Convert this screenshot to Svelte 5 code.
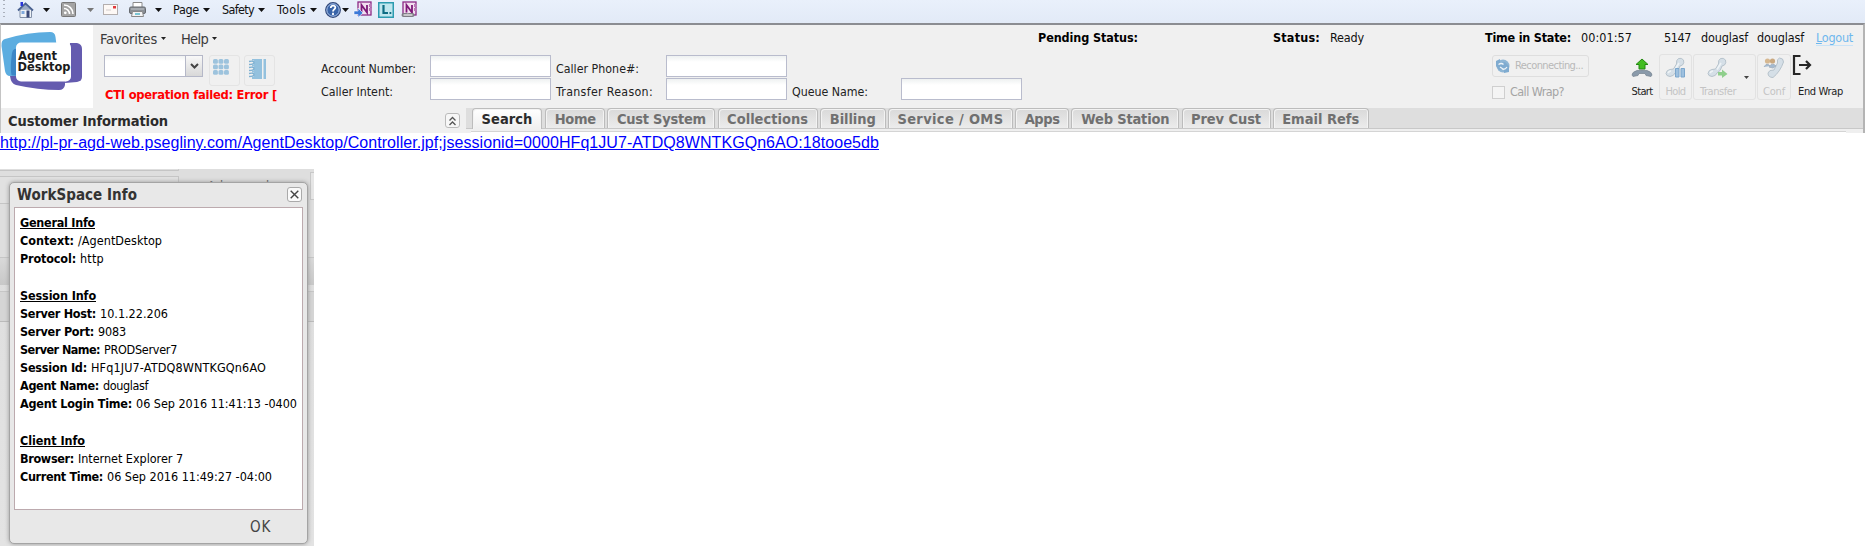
<script>
  // Spread the tracking of a label so that it fills the width given for it.
  function fit(node, width) {
    node.style.letterSpacing = '0px';
    const natural = node.getBoundingClientRect().width;
    node.style.letterSpacing = (width - natural) / node.textContent.length + 'px';
  }
  const tabs = [
    ['Search', 51, 70], ['Home', 41, 60], ['Cust System', 89, 108], ['Collections', 81, 100],
    ['Billing', 46, 66], ['Service / OMS', 106, 125], ['Apps', 35, 54],
    ['Web Station', 88, 108], ['Prev Cust', 70, 89], ['Email Refs', 77, 96]
  ];
  const info = [
    ['General Info', 75],
    ['Context:', 54, '/AgentDesktop', 84],
    ['Protocol:', 56, 'http', 24],
    [],
    ['Session Info', 76],
    ['Server Host:', 76, '10.1.22.206', 68],
    ['Server Port:', 74, '9083', 28],
    ['Server Name:', 80, 'PRODServer7', 73],
    ['Session Id:', 67, 'HFq1JU7-ATDQ8WNTKGQn6AO', 175],
    ['Agent Name:', 79, 'douglasf', 45],
    ['Agent Login Time:', 112, '06 Sep 2016 11:41:13 -0400', 161],
    [],
    ['Client Info', 65],
    ['Browser:', 54, 'Internet Explorer 7', 105],
    ['Current Time:', 83, '06 Sep 2016 11:49:27 -04:00', 165]
  ];
</script>

{#snippet arrow()}
  <svg class="arrow" width="7" height="4" viewBox="0 0 7 4"><path d="M0 0h7L3.500 4z" fill="currentColor" /></svg>
{/snippet}
{#snippet handset()}
  <path d="M1 16.500Q1.500 13 5 12.500l3.500-.5 3-5Q11 3 13.500 1.500q3-1 5 1.500 1 3-1 5L15 9q-1 5-5 7-1 3-5 3.500-4-.5-4-3z" stroke="#b7c3cc" fill="#d5dfe7" />
  <path d="M10 12.500l4-6.500M3 16q1-2 3-2" stroke="#eef3f6" stroke-width="1.700" fill="none" />
{/snippet}
{#snippet onenote()}
  <rect x="5" y="1" width="13" height="13" fill="#f2dff0" stroke="#8b2a86" stroke-width="1.300" />
  <path d="M16 3h3v3h-3zM16 7h3v3h-3z" fill="#b877b5" />
  <path d="M8.500 11.500V4l5.500 7.500V4" fill="none" stroke="#7d1978" stroke-width="1.800" />
{/snippet}

<div class="page">
  <div class="toolbar">
    <div class="grip"></div>
    <svg class="home" width="17" height="17" viewBox="0 0 17 17"><path d="M3 8h11.500v8.500H3z" fill="#eef2f7" stroke="#8391a8" /><path d="M8.500 3.500l5 5h-10z" fill="#9aa9c4" /><path d="M1 9.500l7.500-7 7.500 7" fill="none" stroke="#4a6291" stroke-width="1.800" /><path d="M3.500 1h2.500v4H3.500z" fill="#2834d8" /><path d="M4.500 10h3v3h-3z" fill="#7fa9dc" /><path d="M9.500 9.500h3v7h-3z" fill="#3b4a78" /></svg>
    <span class="a1">{@render arrow()}</span>
    <svg class="rss" width="15" height="15" viewBox="0 0 15 15"><rect x=".5" y=".5" width="14" height="14" rx="1" fill="#a4a4a4" stroke="#777" /><circle cx="4.300" cy="10.800" r="1.400" fill="#fff" /><path d="M3 6.500a5.500 5.500 0 0 1 5.500 5.500M3 3a9 9 0 0 1 9 9" fill="none" stroke="#fff" stroke-width="1.600" /></svg>
    <span class="a2">{@render arrow()}</span>
    <svg class="mail" width="15" height="11" viewBox="0 0 15 11"><rect x=".5" y=".5" width="14" height="10" fill="#fdf8f5" stroke="#b3aeae" /><path d="M10 2h3v2.500h-3z" fill="#e0383c" /><path d="M3 6h5" stroke="#d2cccc" /></svg>
    <svg class="print" width="17" height="15" viewBox="0 0 17 15"><path d="M4 .5h9V6H4z" fill="#fff" stroke="#8a8a8a" /><rect x=".5" y="5" width="16" height="6.500" rx="1.500" fill="#8b9096" stroke="#666a70" /><path d="M3.500 9.500h10l1 5h-12z" fill="#f3f3f3" stroke="#888" /><path d="M2 7h13" stroke="#c3c8ce" /><path d="M6 12h5" stroke="#52b4c9" stroke-width="1.500" /></svg>
    <span class="a3">{@render arrow()}</span>
    <span class="m1"><span use:fit={26}>Page</span>{@render arrow()}</span>
    <span class="m2"><span use:fit={32}>Safety</span>{@render arrow()}</span>
    <span class="m3"><span use:fit={29}>Tools</span>{@render arrow()}</span>
    <svg class="help" width="16" height="16" viewBox="0 0 16 16"><circle cx="8" cy="8" r="7.300" fill="#3964a8" stroke="#33497a" stroke-width="1.200" /><circle cx="8" cy="8" r="6.200" fill="none" stroke="#a9c1e8" /><path d="M5.800 6c0-3.400 4.800-3 4.500-.3C10.100 7.500 8 7.300 8 9.500M8 10.800V13" fill="none" stroke="#fff" stroke-width="1.800" /></svg>
    <span class="a4">{@render arrow()}</span>
    <svg class="on1" width="20" height="17" viewBox="0 0 20 17">{@render onenote()}<path d="M1 10h4V7l5 5-5 4.500v-3H1z" fill="#3b79d8" stroke="#fff" stroke-width=".6" /></svg>
    <svg class="lync" width="16" height="16" viewBox="0 0 16 16"><rect x=".75" y=".75" width="14.500" height="14.500" fill="#bfe6ee" stroke="#2c9bb0" stroke-width="1.500" /><path d="M5.500 3v8h4.500" fill="none" stroke="#0e6d84" stroke-width="2.200" /><path d="M11.500 10h1.800v2h-1.800z" fill="#0e6d84" /></svg>
    <svg class="on2" width="20" height="17" viewBox="0 0 20 17">{@render onenote()}<path d="M5.500 14h3m2.500 0h3.500" stroke="#7d7d85" stroke-width="4" stroke-linecap="round" /><path d="M5.500 14h9" stroke="#eee" stroke-width="1.300" /></svg>
  </div>

  <div class="panel">
    <div class="header">
      <div class="logo">
        <svg width="92" height="83" viewBox="0 0 92 83">
          <path d="M69 18h7q5 1 5 6v28q0 4-5 5l-12 1z" fill="#645baf" />
          <path d="M9 51h55v9q-1 5-6 5-21 0-43-5-5-1-6-9z" fill="#645baf" />
          <path d="M4 14Q27 7 49 7q5 0 5.500 5l1 8H20v30l-11 1q-4 0-5-5L.500 21Q0 15 4 14z" fill="#5cade0" />
          <path d="M11 28q-2 14-.5 22.500l6 .5V24h-3q-2 1-2.500 4z" fill="#3c86c6" />
          <rect x="15" y="17.500" width="55" height="39" rx="5" fill="#fff" />
          <text x="17" y="34.500" textLength="39" lengthAdjust="spacingAndGlyphs">Agent</text>
          <text x="16.500" y="46" textLength="53" lengthAdjust="spacingAndGlyphs">Desktop</text>
        </svg>
      </div>

      <div class="left">
        <div class="menus">
          <span class="fav"><span use:fit={57}>Favorites</span>{@render arrow()}</span>
          <span class="hlp"><span use:fit={27}>Help</span>{@render arrow()}</span>
        </div>
        <div class="dial">
          <div class="combo"><div class="drop"><svg width="9" height="6" viewBox="0 0 9 6"><path d="M1 1l3.500 3.500L8 1" fill="none" stroke="#444" stroke-width="2" /></svg></div></div>
          <div class="tool"><svg width="16" height="16" viewBox="0 0 16 16" fill="#9dc3dd">{#each [0, 5.500, 11] as y}{#each [0, 5.500, 11] as x}<rect {x} {y} width="4.900" height="4.700" rx="1.500" />{/each}{/each}</svg></div>
          <div class="tool book"><svg width="20" height="20" viewBox="0 0 20 20"><path d="M5 0h10v20H5zM16.500 0H19v20h-2.500z" fill="#93c1de" /><path d="M0 3.500h7M0 9.500h7M0 15.500h7" stroke="#f0f0f0" stroke-width="4" /><path d="M2 2.500q5-1 5 1t-5 2M2 8.500q5-1 5 1t-5 2M2 14.500q5-1 5 1t-5 2" fill="none" stroke="#7fb1d2" stroke-width="1.400" /></svg></div>
        </div>
        <div class="error"><span use:fit={172}>CTI operation failed: Error [</span></div>
      </div>

      <div class="fields">
        <span use:fit={95}>Account Number:</span><div class="input"></div>
        <span use:fit={83}>Caller Phone#:</span><div class="input"></div>
        <span></span><span></span>
        <span use:fit={72}>Caller Intent:</span><div class="input"></div>
        <span use:fit={97}>Transfer Reason:</span><div class="input"></div>
        <span use:fit={76}>Queue Name:</span><div class="input"></div>
      </div>

      <div class="right">
        <div class="status">
          <b class="pend"><span use:fit={100}>Pending Status:</span></b>
          <b class="stat"><span use:fit={47}>Status:</span></b>
          <span class="ready"><span use:fit={34}>Ready</span></span>
          <b class="time"><span use:fit={86}>Time in State:</span></b>
          <span class="clock"><span use:fit={51}>00:01:57</span></span>
          <span class="ext"><span use:fit={27}>5147</span></span>
          <span class="u1"><span use:fit={47}>douglasf</span></span>
          <span class="u2"><span use:fit={47}>douglasf</span></span>
          <span class="logout"><span use:fit={37}><u>L</u>ogout</span></span>
        </div>
        <div class="calls">
          <div class="wrapcol">
            <div class="recon"><svg width="16" height="16" viewBox="0 0 16 16"><circle cx="8" cy="8" r="6.500" fill="#8fb6d5" /><path d="M1 3l4-2v4l5-1 4 4v6l-5 1v-4l-5 1-3-4z" fill="#7fabd0" /><path d="M3.500 6.500q3-2 5 0M7 11q3 1 5-2M5 9l3 2" fill="none" stroke="#eef4f8" stroke-width="1.300" /></svg><span use:fit={68}>Reconnecting...</span></div>
            <div class="check"><i></i><span use:fit={54}>Call Wrap?</span></div>
          </div>
          <div class="call start">
            <svg width="22" height="22" viewBox="0 0 22 22"><path d="M11 2l6 5.500h-3V12H8V7.500H5z" fill="#43bd22" stroke="#258a12" /><path d="M1 18q0-3 5-4.500 5-1 10 0 5 1.500 5 4.500l-1 1.500-5-1-1-2H8l-1 2-5 1z" fill="#8a9aaa" stroke="#75828f" stroke-width=".7" /></svg>
            <span use:fit={21}>Start</span>
          </div>
          <div class="call hold">
            <svg width="22" height="22" viewBox="0 0 22 22">{@render handset()}<path d="M10.500 11.500H14v8.500h-3.500zM16 11.500h3.500V20H16z" fill="#9dc0df" stroke="#7ba6cc" /></svg>
            <span use:fit={20}>Hold</span>
          </div>
          <div class="call transfer">
            <svg width="22" height="22" viewBox="0 0 22 22">{@render handset()}<path d="M11 15h4v-2.500l5.500 4.500-5.500 4v-2.500h-4z" fill="#8fcf8c" /></svg>
            <span use:fit={36}>Transfer</span>
            <div class="more"><svg width="5" height="3" viewBox="0 0 5 3"><path d="M0 0h5L2.500 3z" fill="#444" /></svg></div>
          </div>
          <div class="call conf">
            <svg width="22" height="22" viewBox="0 0 22 22"><path d="M5 16q0 4.500 5 4.500Q17 15 20.500 5q0-4-4-4-3 1-2 5L11 13q-5-.500-6 3z" fill="#d5dfe7" stroke="#b7c3cc" /><circle cx="4.500" cy="4" r="2.600" fill="#d6b891" /><circle cx="9.500" cy="4" r="2.600" fill="#c9a880" /><path d="M1 10q3-5 6-1M6 10q3-5 7-1l-3 2z" fill="#a3bad1" stroke="#a5b3c2" /></svg>
            <span use:fit={22}>Conf</span>
          </div>
          <div class="call end">
            <svg width="22" height="22" viewBox="0 0 22 22"><path d="M8.500 1H2v18h6.500M7 10h11M14 6l4 4-4 4" fill="none" stroke="#262626" stroke-width="2.200" /></svg>
            <span use:fit={45}>End Wrap</span>
          </div>
        </div>
      </div>
    </div>

    <div class="lower">
      <div class="customer">
        <span use:fit={160}>Customer Information</span>
        <div class="mini"><svg width="9" height="10" viewBox="0 0 9 10"><path d="M1.500 4.500l3-3 3 3M1.500 9l3-3 3 3" fill="none" stroke="#555" stroke-width="1.300" /></svg></div>
      </div>
      <div class="content">
        <div class="tabs">
          {#each tabs as [name, tw, w], i}
            <div class="tab" class:active={i === 0} style:width={w + 'px'}><span use:fit={tw}>{name}</span></div>
          {/each}
        </div>
        <div class="strip"><div class="inner"></div></div>
      </div>
    </div>
  </div>

  <div class="linkrow"><a href="#session"><span use:fit={879}>http://pl-pr-agd-web.psegliny.com/AgentDesktop/Controller.jpf;jsessionid=0000HFq1JU7-ATDQ8WNTKGQn6AO:18tooe5db</span></a></div>

  <div class="backdrop">
    <div class="back1"></div><div class="back2"></div><div class="band"></div><div class="band low"></div>
    <div class="adv">Advanced</div><div class="back3"></div>
    <div class="dialog">
      <div class="title"><span use:fit={120}>WorkSpace Info</span><div class="close"><svg width="9" height="9" viewBox="0 0 9 9"><path d="M.7.700l7.600 7.600M8.300.700L.7 8.300" stroke="#444" stroke-width="1.400" /></svg></div></div>
      <div class="body">
        {#each info as [k, kw, v, vw]}
          <div class="line">{#if k}<b class:head={!v}><span use:fit={kw}>{k}</span></b>{/if}{#if v}<span use:fit={vw}>{v}</span>{/if}</div>
        {/each}
      </div>
      <div class="foot"><span use:fit={21}>OK</span></div>
    </div>
  </div>
</div>

<style>
  .page { width: 1865px; height: 546px; overflow: hidden; background: #fff; font: 12.500px/16px "DejaVu Sans Condensed", "DejaVu Sans", sans-serif; font-stretch: condensed; color: #222; white-space: nowrap; }
  .page * { box-sizing: border-box; }
  svg { display: block; flex: none; overflow: visible; }
  span { display: inline-block; }
  .toolbar { height: 23px; display: flex; align-items: center; padding: 0 0 4px 3px; background: linear-gradient(#e9f0fb, #e2eaf7); font-size: 12.500px; color: #111; }
  .grip { width: 2px; height: 20px; background: repeating-linear-gradient(#aab0bb 0 1px, transparent 1px 4px); }
  .toolbar > span { display: flex; align-items: center; gap: 4px; }
  .home { margin-left: 12px; }
  .a1 { margin-left: 9px; }
  .rss { margin-left: 11px; }
  .a2 { margin-left: 11px; color: #777; }
  .mail { margin-left: 9px; }
  .print { margin-left: 11px; }
  .a3 { margin-left: 9px; }
  .m1 { margin-left: 11px; }
  .m2 { margin-left: 12px; }
  .m3 { margin-left: 12px; }
  .help { margin-left: 8px; }
  .a4 { margin-left: 1px; }
  .on1 { margin-left: 4px; }
  .lync { margin-left: 5px; margin-right: 4px; }
  .panel { height: 110px; border-top: 2px solid #8b8d92; border-left: 1px solid #c4c4c4; border-right: 2px solid #b4b4b4; background: #f0f0f0; }
  .header { height: 83px; display: flex; }
  .logo { width: 92px; height: 83px; background: #fff; }
  .logo text { font: bold 12px "DejaVu Sans", sans-serif; fill: #1b1b1b; }
  .left { width: 228px; }
  .menus { display: flex; height: 30px; padding: 5px 0 0 7px; font-size: 14.500px; color: #3a3a3a; }
  .menus > span { display: flex; align-items: center; height: 17px; }
  .menus .arrow { width: 5px; height: 3px; margin-left: 4px; color: #222; }
  .hlp { margin-left: 15px; }
  .dial { display: flex; padding-left: 11px; height: 32px; }
  .combo { width: 99px; height: 22px; border: 1px solid #b5b8c8; background: linear-gradient(#f0f2f2, #fff 5px); display: flex; justify-content: flex-end; }
  .drop { width: 17px; border-left: 1px solid #b5b8c8; background: linear-gradient(#f8f8f8, #d8d8d8); display: grid; place-items: center; }
  .tool { width: 31px; height: 31px; margin-left: 6px; border: 1px solid #e4e4e4; border-radius: 3px; padding: 3px; }
  .book { margin-left: 4px; padding: 3px 2px; }
  .error { padding: 0 0 0 12px; line-height: 16px; font-weight: bold; font-size: 12.800px; color: #f00; }
  .fields { width: 704px; height: 83px; padding-top: 30px; display: grid; grid-template-columns: 109px 126px 110px 126px 109px 121px; grid-template-rows: 23px 23px; justify-items: start; font-size: 12.300px; }
  .fields span { padding-top: 6px; }
  .input { width: 121px; height: 22px; border: 1px solid #b9bccd; background: linear-gradient(#eef1f1, #fff 6px); }
  .right { flex: 1; }
  .status { height: 29px; padding-top: 5px; display: flex; color: #111; margin-left: 13px; }
  .status b { color: #000; }
  .stat { margin-left: 135px; }
  .ready { margin-left: 10px; }
  .time { margin-left: 121px; }
  .clock { margin-left: 10px; }
  .ext { margin-left: 32px; }
  .u1 { margin-left: 10px; }
  .u2 { margin-left: 9px; }
  .logout { margin-left: 12px; color: #6db7ee; border-bottom: 1px solid #c9e3f7; height: 16px; }
  .calls { display: flex; margin-left: 467px; }
  .wrapcol { width: 139px; padding-top: 1px; color: #a4a4a4; }
  .recon { width: 97px; height: 22px; border: 1px solid #dedede; border-radius: 3px; display: flex; align-items: center; gap: 4px; padding-left: 2px; font-size: 11px; color: #b8b8b8; }
  .check { display: flex; align-items: center; gap: 5px; margin-top: 7px; }
  .check i { width: 13px; height: 13px; border: 1px solid #cfcfcf; background: #f4f4f4; }
  .call { height: 46px; border: 1px solid #e2e2e2; border-radius: 3px; display: flex; flex-direction: column; align-items: center; padding-top: 2px; font-size: 11px; line-height: 14px; color: #c4c4c4; position: relative; }
  .call > span { margin-top: 6px; }
  .start { width: 22px; border-color: transparent; color: #222; margin-right: 6px; }
  .hold { width: 33px; margin-right: 1px; }
  .transfer { width: 63px; margin-right: 1px; padding-right: 13px; }
  .more { position: absolute; right: 6px; top: 21px; }
  .conf { width: 34px; }
  .end { width: 54px; border-color: transparent; color: #222; align-items: flex-start; padding: 0; }
  .end > span { margin: 8px 0 0 6px; }
  .lower { display: flex; height: 25px; }
  .customer { width: 465px; display: flex; justify-content: space-between; padding: 5px 6px 0 7px; font-size: 14.500px; font-weight: bold; color: #2b2b2b; }
  .mini { width: 15px; height: 15px; border: 1px solid #bbb; border-radius: 3px; background: #f7f7f7; display: grid; place-items: center; }
  .content { flex: 1; background: #dedede; }
  .tabs { display: flex; gap: 2.200px; padding-left: 6px; height: 20px; }
  .tab { border: 1px solid #bcbcbc; border-bottom: 0; border-radius: 4px 4px 0 0; box-shadow: inset 1px 1px #f3f3f3, inset -1px 0 #f3f3f3; background: linear-gradient(#d9d9d9, #ececec); text-align: center; font-size: 14.500px; line-height: 20px; font-weight: bold; color: #707070; flex: none; overflow: hidden; }
  .tab.active { background: linear-gradient(#fff, #efefef); color: #2b2b2b; height: 21px; margin-right: 1px; }
  .strip { height: 5px; padding: 2px 17px 0 5px; background: #efefef; border-top: 1px solid #c8c8c8; }
  .inner { height: 2px; border-top: 1px solid #d4d4d4; background: #fff; }
  .linkrow { height: 36px; padding-top: 1px; font: 16px/18px "Liberation Sans", Arial, sans-serif; }
  .linkrow a { color: #00f; text-decoration: underline; }
  .backdrop { width: 314px; height: 377px; position: relative; background: linear-gradient(#dedede 0 85px, #dedede 86px, #e3e3e3); padding: 13px 0 0 9px; }
  .back1, .back2, .back3, .band, .adv { position: absolute; }
  .back1 { left: 0; top: 0; width: 179px; height: 2px; border-right: 1px solid #ccc; border-bottom: 1px solid #c5c5c5; }
  .back2 { left: 0; top: 7px; width: 179px; height: 28px; border: 1px solid #c5c5c5; border-left: 0; background: #e1e1e1; }
  .back3 { left: 310px; top: 3px; width: 4px; height: 28px; border: 1px solid #c8c8c8; border-right: 0; background: #e6e6e6; }
  .band { left: 0; top: 88px; width: 314px; height: 28px; border-top: 1px solid #c6c6c6; background: linear-gradient(#d9d9d9, #c8c8c8); }
  .band.low { top: 122px; height: 31px; border-bottom: 1px solid #bbb; background: #d5d5d5; }
  .adv { left: 207px; top: 9px; font-size: 14px; color: #555; }
  .dialog { position: relative; width: 299px; height: 362px; border: 1px solid #a4a4a4; border-radius: 5px; background: #e8e8e8; box-shadow: 0 0 4px #999; padding: 0 4px; }
  .title { height: 24px; display: flex; justify-content: space-between; padding: 4px 1px 0 3px; font-size: 15px; line-height: 17px; font-weight: bold; color: #333; }
  .close { width: 15px; height: 15px; border: 1px solid #aaa; border-radius: 3px; background: #fafafa; display: grid; place-items: center; }
  .body { height: 303px; border: 1px solid #bcaaae; background: #fff; padding: 6px 0 0 5px; color: #000; line-height: 18.130px; }
  .line { height: 18.130px; display: flex; gap: 4px; }
  .head { text-decoration: underline; }
  .head span, .logout span, .linkrow span { display: inline; }
  .foot { padding: 9px 32px 0 0; text-align: right; font-size: 15px; color: #444; }
</style>
